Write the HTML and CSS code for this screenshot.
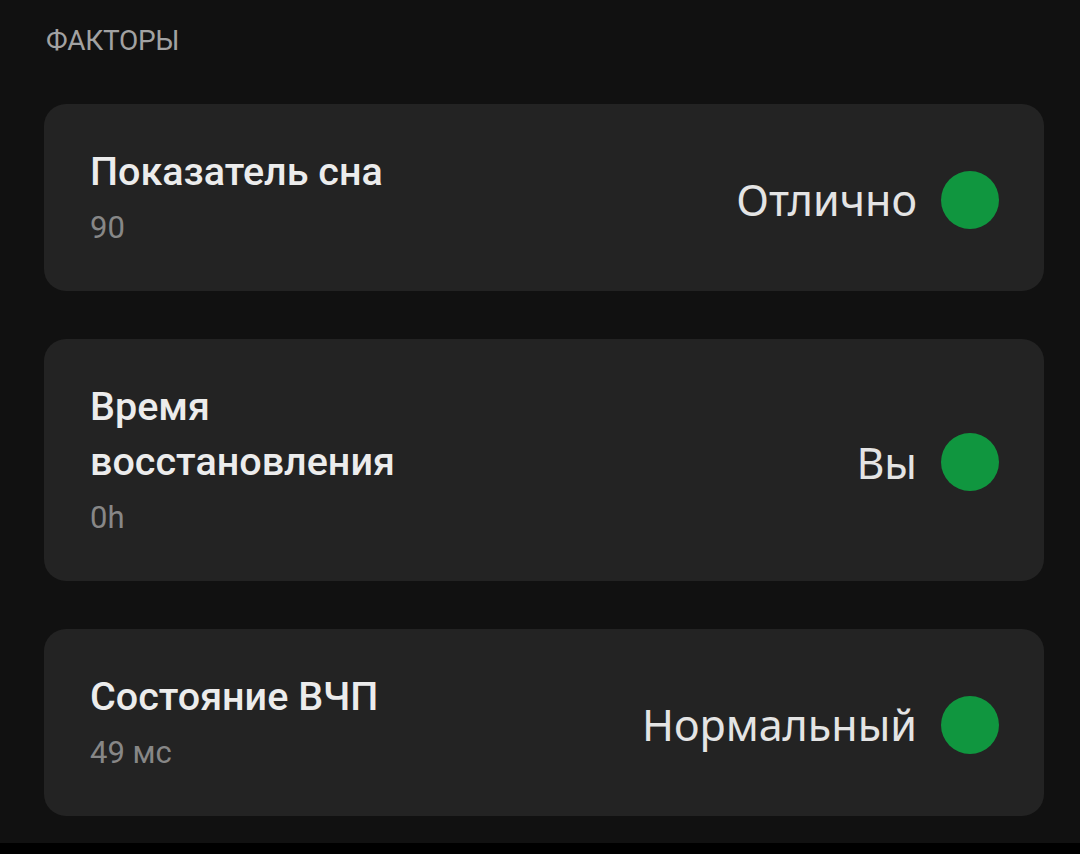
FILE: index.html
```html
<!DOCTYPE html>
<html lang="ru">
<head>
  <meta charset="UTF-8">
  <meta name="viewport" content="width=device-width, initial-scale=1.0">
  <title>Факторы</title>
  <link rel="stylesheet" href="styles.css">
</head>
<body>
  <div class="root">
    <h3 class="section-title">ФАКТОРЫ</h3>
    <div class="factors">
      <div class="factor">
        <div class="factor-info">
          <p class="factor-name">Показатель сна</p>
          <p class="factor-value">90</p>
        </div>
        <div class="factor-status">
          <span class="status-text">Отлично</span>
          <span class="status-dot"></span>
        </div>
      </div>
      <div class="factor">
        <div class="factor-info">
          <p class="factor-name">Время восстановления</p>
          <p class="factor-value">0h</p>
        </div>
        <div class="factor-status">
          <span class="status-text">Вы</span>
          <span class="status-dot"></span>
        </div>
      </div>
      <div class="factor">
        <div class="factor-info">
          <p class="factor-name">Состояние ВЧП</p>
          <p class="factor-value">49 мс</p>
        </div>
        <div class="factor-status">
          <span class="status-text">Нормальный</span>
          <span class="status-dot"></span>
        </div>
      </div>
    </div>
  </div>
</body>
</html>
```

FILE: styles.css
```css
* {
  margin: 0;
  padding: 0;
  box-sizing: border-box;
  font-family: Roboto, "Noto Sans", sans-serif;
}
body {
  height: 854px;
  background-color: #000;
  overflow: hidden;
}
div.root {
  height: 843px;
  padding: 25px 36px 0 44px;
  background-color: #111111;
}
h3.section-title {
  margin-left: 2px;
  color: #a2a2a2;
  font-size: 28px;
  font-weight: 400;
  line-height: 32px;
  letter-spacing: -0.3px;
}
div.factors {
  margin-top: 47px;
  display: flex;
  flex-direction: column;
  gap: 48px;
}
div.factor {
  padding: 40px 45px 36px 46px;
  border-radius: 22px;
  background-color: #232323;
  display: flex;
  align-items: center;
  justify-content: space-between;
}
div.factor-info {
  max-width: 340px;
}
p.factor-name {
  color: #ececec;
  font-size: 39.5px;
  font-weight: 500;
  line-height: 55px;
}
p.factor-value {
  margin-top: 2px;
  color: #878787;
  font-size: 31px;
  line-height: 54px;
}
div.factor-status {
  display: flex;
  align-items: center;
  gap: 24px;
}
span.status-text {
  color: #e4e4e4;
  font-family: "Noto Sans", Roboto, sans-serif;
  font-size: 43px;
  font-weight: 400;
}
span.status-dot {
  width: 58px;
  height: 58px;
  border-radius: 50%;
  background-color: #10963f;
  display: block;
}
```
